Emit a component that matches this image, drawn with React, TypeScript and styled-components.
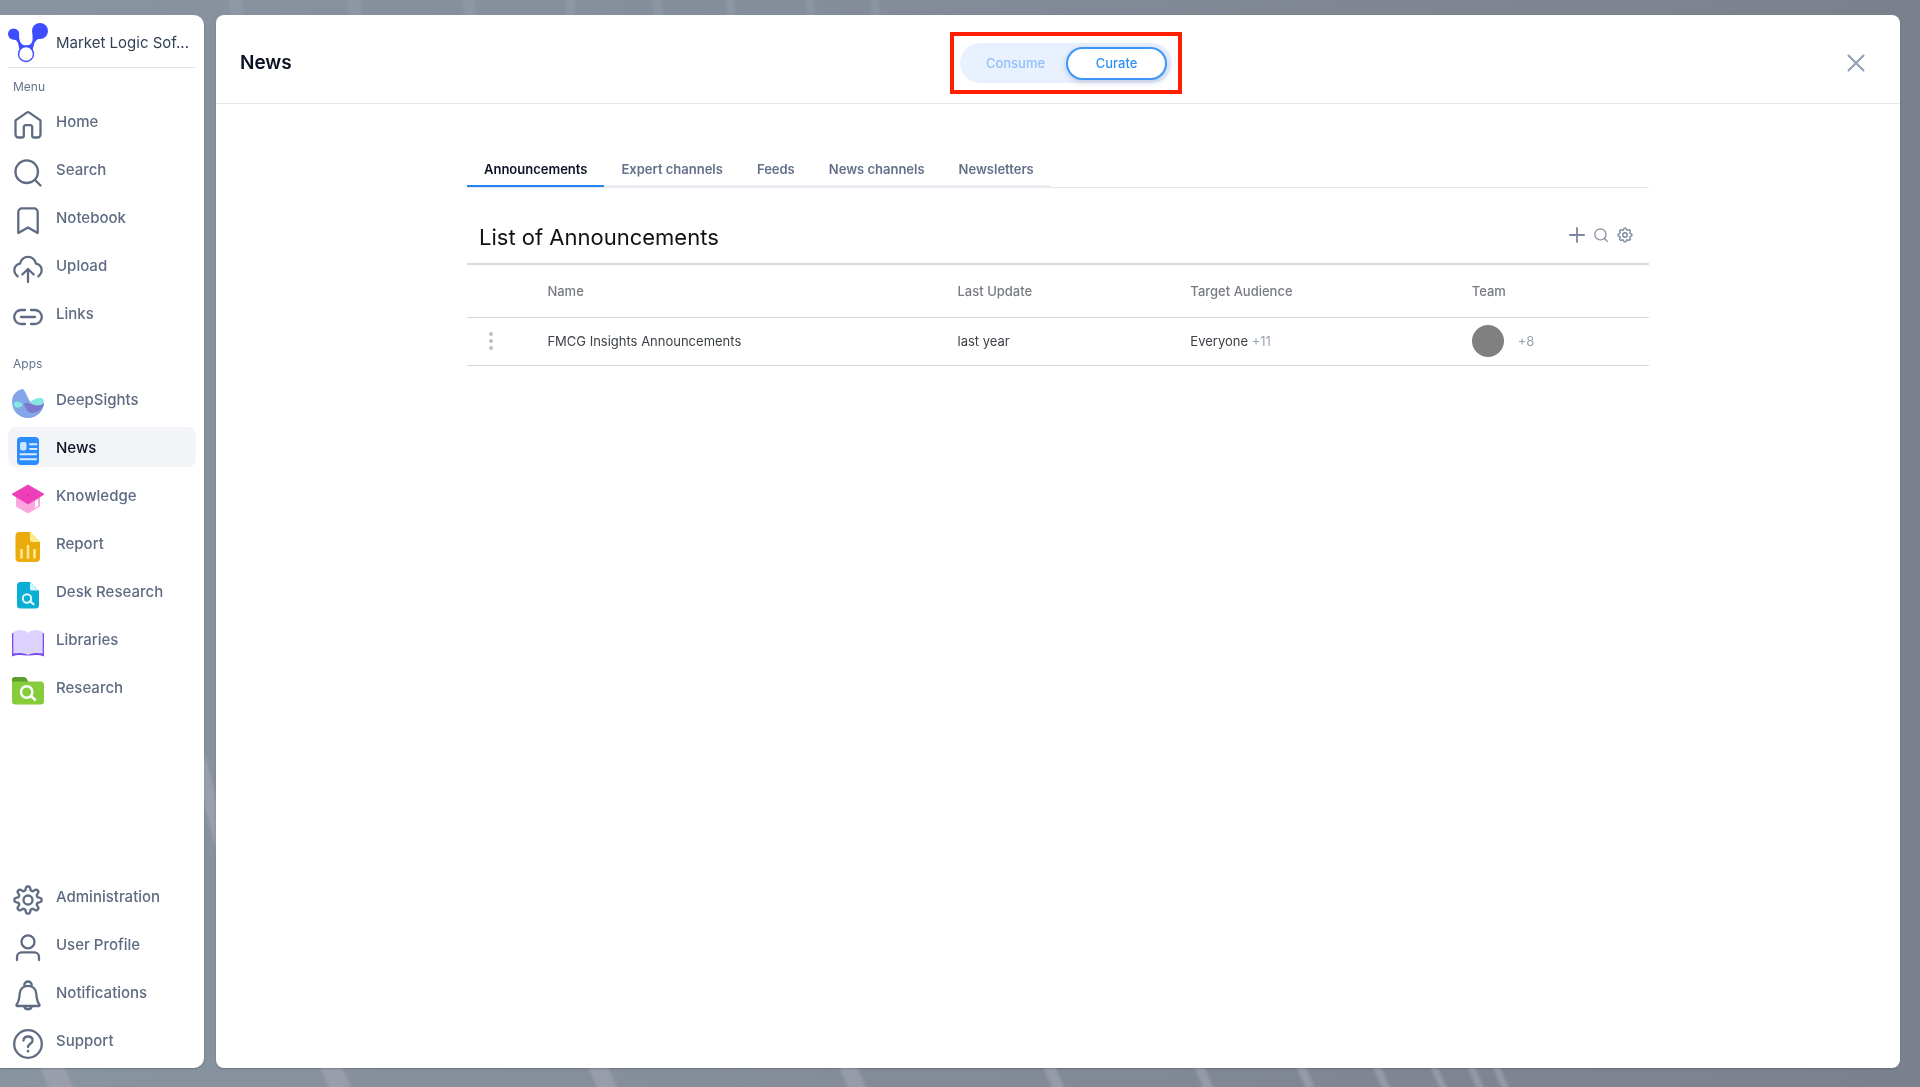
import React from "react";
import styled, { createGlobalStyle, css } from "styled-components";

const sans = `Inter, "Liberation Sans", sans-serif`;

const GlobalStyle = createGlobalStyle`
  *, *::before, *::after { box-sizing: border-box; }
  body {
    margin: 0;
    background: #848c99;
    font-family: ${sans};
    color: #0f172a;
  }
  button { font-family: inherit; }
`;

const Page = styled.div`
  display: flex;
  gap: 12px;
  min-height: 100vh;
  padding: 15px 20px 19px 0;
`;

const Backdrop = styled.svg`
  position: fixed;
  inset: 0;
  width: 100%;
  height: 100%;
  z-index: -1;
`;

const Sidebar = styled.aside`
  display: flex;
  flex-direction: column;
  flex: 0 0 204px;
  min-width: 0;
  padding: 8px;
  background: #fff;
  border-radius: 0 10px 10px 0;
  box-shadow: 0 1px 2px rgba(30, 41, 59, 0.25);
`;

const Brand = styled.div`
  display: flex;
  align-items: center;
  gap: 8px;
  padding-bottom: 4px;
  border-bottom: 1px solid #e2e4e8;
  font-size: 15px;
  line-height: 24px;
  color: #334155;
  white-space: nowrap;
  svg { flex: none; }
`;

const GroupLabel = styled.h2<{ $first?: boolean }>`
  margin: ${(p) => (p.$first ? "10px" : "22px")} 0 ${(p) => (p.$first ? "5px" : "6px")};
  padding-left: 5px;
  font-size: 12px;
  line-height: 18px;
  font-weight: 400;
  color: #64748b;
`;

const NavList = styled.ul<{ $bottom?: boolean }>`
  display: flex;
  flex-direction: column;
  gap: 8px;
  margin: ${(p) => (p.$bottom ? "auto" : "0")} 0 0;
  padding: 0;
  list-style: none;
`;

const NavLink = styled.a<{ $active?: boolean }>`
  display: flex;
  align-items: center;
  gap: 12px;
  height: 40px;
  padding: 1px 0 0 4px;
  border-radius: 8px;
  font-size: 15px;
  line-height: 24px;
  font-weight: 500;
  color: #5f6b82;
  text-decoration: none;
  ${(p) => p.$active && css`
    background: #f2f4f8;
    color: #0b1224;
  `}
  svg { align-self: flex-end; flex: none; }
`;

const Main = styled.main`
  flex: 1;
  min-width: 0;
  background: #fff;
  border-radius: 8px;
  box-shadow: 0 1px 2px rgba(30, 41, 59, 0.25);
`;

const Header = styled.header`
  display: grid;
  grid-template-columns: 1fr auto 1fr;
  align-items: center;
  height: 89px;
  padding: 8px 8px 0 24px;
  border-bottom: 1px solid #e5e7eb;
`;

const PageTitle = styled.h1`
  margin: 0;
  font-size: 19px;
  line-height: 28px;
  font-weight: 600;
  color: #0b1224;
`;

const Highlight = styled.div`
  padding: 7px 6px;
  border: 4px solid #ff1e00;
`;

const Toggle = styled.div`
  display: flex;
  height: 40px;
  padding: 4px 5px;
  border-radius: 20px;
  background: #eaf1fe;
`;

const ToggleButton = styled.button<{ $on?: boolean }>`
  width: 101px;
  height: 33px;
  padding: 0 0 2px;
  border: 2px solid ${(p) => (p.$on ? "#3b96f7" : "transparent")};
  border-radius: 17px;
  background: ${(p) => (p.$on ? "#fff" : "transparent")};
  box-shadow: ${(p) => (p.$on ? "0 2px 6px rgba(51, 80, 130, 0.25)" : "none")};
  font-size: 13px;
  font-weight: 500;
  color: ${(p) => (p.$on ? "#2f8ff5" : "#8fc0fb")};
`;

const CloseButton = styled.button`
  display: grid;
  place-items: center;
  justify-self: end;
  width: 48px;
  height: 48px;
  margin-right: 12px;
  padding: 0;
  border: 0;
  background: none;
`;

const Content = styled.div`
  width: 100%;
  max-width: 1182px;
  margin: 0 auto;
  padding-top: 48px;
`;

const Tabs = styled.div`
  display: flex;
  border-bottom: 1px solid #e5e7eb;
`;

const Tab = styled.button<{ $on?: boolean }>`
  height: 35px;
  padding: 0 17px;
  border: 0;
  border-bottom: 2px solid ${(p) => (p.$on ? "#2486f5" : "#eceef3")};
  background: none;
  font-size: 13px;
  line-height: 20px;
  font-weight: 600;
  color: ${(p) => (p.$on ? "#0b1224" : "#64708a")};
`;

const ListHead = styled.div`
  display: flex;
  align-items: center;
  justify-content: space-between;
  height: 77px;
  padding: 22px 14px 0 12px;
  border-bottom: 2px solid #dadbdd;
`;

const ListTitle = styled.h2`
  margin: 0;
  font-size: 22px;
  line-height: 32px;
  font-weight: 400;
  color: #111;
`;

const Tools = styled.div`
  display: flex;
  align-items: center;
  gap: 4px;
  margin-bottom: 4px;
`;

const ToolButton = styled.button`
  display: grid;
  place-items: center;
  width: 20px;
  height: 32px;
  padding: 0;
  border: 0;
  background: none;
`;

const Table = styled.table`
  width: 100%;
  table-layout: fixed;
  border-collapse: collapse;
  font-size: 13px;
  line-height: 20px;
`;

const Col = styled.col<{ $w: string }>`
  width: ${(p) => p.$w};
`;

const Th = styled.th`
  height: 52px;
  padding: 0;
  border-bottom: 1px solid #d6d8da;
  text-align: left;
  font-weight: 500;
  color: #777b80;
`;

const Td = styled.td`
  height: 48px;
  padding: 0;
  border-bottom: 1px solid #d6d8da;
  color: #3d4247;
`;

const RowMenu = styled.button`
  display: grid;
  place-items: center;
  width: 24px;
  height: 32px;
  margin-left: 12px;
  padding: 0;
  border: 0;
  background: none;
`;

const Muted = styled.span`
  color: #9aa5b1;
`;

const Team = styled.div`
  display: flex;
  align-items: center;
  gap: 14px;
`;

const Avatar = styled.span`
  width: 32px;
  height: 32px;
  border-radius: 50%;
  background: #808080;
`;

const Line = ({ children }: { children: React.ReactNode }) => (
  <svg width="32" height="32" viewBox="0 0 32 32" fill="none" stroke="#5f6b82" strokeWidth="2.3" strokeLinecap="round" strokeLinejoin="round" aria-hidden="true">
    {children}
  </svg>
);

const Fill = ({ children }: { children: React.ReactNode }) => (
  <svg width="32" height="32" viewBox="0 0 32 32" fill="none" aria-hidden="true">
    {children}
  </svg>
);

const gearPath = (c: number, rOut: number, rIn: number) => {
  const pts: string[] = [];
  const steps = 96;
  for (let i = 0; i < steps; i++) {
    const a = (i / steps) * Math.PI * 2;
    const wave = Math.tanh(2 * Math.cos(8 * a)) / Math.tanh(2);
    const r = (rOut + rIn) / 2 + ((rOut - rIn) / 2) * wave;
    pts.push(`${(c + r * Math.sin(a)).toFixed(2)} ${(c - r * Math.cos(a)).toFixed(2)}`);
  }
  return `M${pts.join("L")}Z`;
};

const icons: Record<string, React.ReactNode> = {
  Home: <Line><path d="M3.5 11.4 14.7 3.6a2.2 2.2 0 0 1 2.6 0L28.5 11.4V25.5a3 3 0 0 1-3 3H22a1.8 1.8 0 0 1-1.8-1.8V18a1.8 1.8 0 0 0-1.8-1.8h-4.8a1.8 1.8 0 0 0-1.8 1.8v8.7a1.8 1.8 0 0 1-1.8 1.8H6.5a3 3 0 0 1-3-3Z" /></Line>,
  Search: <Line><circle cx="14.7" cy="14.7" r="11.3" /><path d="m22.8 22.8 5.7 5.7" /></Line>,
  Notebook: <Line><path d="M6.3 28V7a3.6 3.6 0 0 1 3.6-3.6h12.2A3.6 3.6 0 0 1 25.7 7v21L16 22.500Z" /></Line>,
  Upload: <Line><path d="M5.6 23.2C0.5 19.5 1.5 12 8 10.7 10.5 1.6 21.5 1.6 24 10.7c6.5 1.3 7.5 8.8 2.4 12.5M16 29V16.5M10.3 21.5 16 16l5.7 5.5" /></Line>,
  Links: <Line><path d="M13 9H9.2a7 7 0 0 0 0 14H13M19 9h3.8a7 7 0 0 1 0 14H19M9 16h14" /></Line>,
  DeepSights: (
    <Fill>
      <path d="M10.500 2C3.5 3.2 0 9 0 15c0 9 7 16 16 16 9.5 0 15.5-7 16-15-3.5 2.5-8 4-12 .5C15 12 13.5 2 10.500 2Z" fill="#84a5e8" />
      <path d="M11 17c4-2 7-1 11 .5 4 1.3 8-.2 10-2C31.500 22 26 26 20 26s-5-6-9-9Z" fill="#7c79cf" />
      <path d="M17.5 15.5c4-3.5 9-5.5 13-4 2 1 1.7 4 0 5.500-4 2.5-8.5 1.5-13-1.500ZM2 16c1.5-2.5 6-2 9 1.5-2 3.5-6 4-8 2.2C1.8 18.7 1.4 17.3 2 16Z" fill="#86e6e2" />
    </Fill>
  ),
  News: (
    <Fill>
      <rect x="5" y="2" width="22" height="28" rx="4" fill="#2b8cff" />
      <rect x="8" y="7" width="6.5" height="8.5" rx="2" fill="#cfe4ff" />
      <path d="M18 9.2h6.500M18 14h6.500M8.5 19.2h15.500M8.5 24.2h15.500" stroke="#dcebff" strokeWidth="2" strokeLinecap="round" />
    </Fill>
  ),
  Knowledge: (
    <Fill>
      <path d="M4 12h24v11.500L16 30.500 4 23.500Z" fill="#fba6df" />
      <path d="m23 18 3-1.8v6.8L23 25Z" fill="#fff" />
      <path d="M16 1.5 31.5 10.500q1 .7 0 1.4L16 21.500.5 11.900q-1-.7 0-1.400Z" fill="#ee3fb8" />
      <circle cx="16" cy="12" r="0.9" fill="#d61f9b" />
    </Fill>
  ),
  Report: (
    <Fill>
      <path d="M7.5 1H18l10 10v16a4 4 0 0 1-4 4H7.500a4 4 0 0 1-4-4V5a4 4 0 0 1 4-4Z" fill="#ebab0c" />
      <path d="M18 1l10 10h-8a2 2 0 0 1-2-2Z" fill="#fdea8f" />
      <path d="M9.5 19v7.500M16 15v11.500M22.5 19v7.500" stroke="#fdea8f" strokeWidth="2.6" strokeLinecap="round" />
    </Fill>
  ),
  "Desk Research": (
    <Fill>
      <path d="M8.5 3H18l9 8.500V26a3.500 3.500 0 0 1-3.500 3.500h-15A3.500 3.500 0 0 1 5 26V6.500A3.500 3.500 0 0 1 8.500 3Z" fill="#0aaed4" />
      <path d="M18 3l9 8.500h-7.500A1.500 1.500 0 0 1 18 10Z" fill="#cff7fd" />
      <circle cx="15" cy="19.5" r="4.2" stroke="#dff9fe" strokeWidth="2" />
      <path d="m18.2 22.2 3.3 3" stroke="#dff9fe" strokeWidth="2.2" strokeLinecap="round" />
    </Fill>
  ),
  Libraries: (
    <Fill>
      <path d="M0 6h3v20h26V6h3v23.500c-5-2-10-1.500-14-1h-4C10 28 5 27.500 0 29.500Z" fill="#7c4dee" />
      <path d="M1.3 5C6 2 13 2.2 16 6c3-3.8 10-4 14.7-1v21.500c-5-.8-10-1-14.7 1.500-4.700-2.500-9.700-2.300-14.700-1.500Z" fill="#dcd3fe" />
    </Fill>
  ),
  Research: (
    <Fill>
      <path d="M0 10V4.500A2.500 2.500 0 0 1 2.500 2H12a3 3 0 0 1 2.600 1.500L17 8Z" fill="#5f9e2b" />
      <path d="M0 6.500h28.500A3.500 3.500 0 0 1 32 10v16a3.500 3.500 0 0 1-3.500 3.500h-25A3.500 3.500 0 0 1 0 26Z" fill="#86cc3b" />
      <circle cx="14.7" cy="17" r="5.7" stroke="#fff" strokeWidth="2.4" />
      <path d="m19 21 4 3.700" stroke="#fff" strokeWidth="2.6" strokeLinecap="round" />
    </Fill>
  ),
  Administration: <Line><path d={gearPath(16, 13.6, 9.8)} /><circle cx="16" cy="16" r="4.5" /></Line>,
  "User Profile": <Line><circle cx="16" cy="9.8" r="6.5" /><path d="M5 28v-3a4.600 4.600 0 0 1 4.600-4.600h12.800A4.600 4.600 0 0 1 27 25v3" /></Line>,
  Notifications: <Line><path d="M12.3 6.500V5.200a3.700 3.700 0 0 1 7.400 0v1.300M16 5.800c5 0 8 3.500 8.300 8 .3 5 .7 7.500 3.200 11a.8.8 0 0 1-.6 1.200H5.100a.8.8 0 0 1-.6-1.200c2.500-3.500 2.900-6 3.200-11 .3-4.500 3.300-8 8.300-8ZM12.300 26.500c.5 3.500 6.900 3.500 7.400 0" /></Line>,
  Support: <Line><circle cx="16" cy="16" r="13.8" /><path d="M11.5 12.500c.3-3 2.200-4 4.600-4 2.600 0 4.500 1.500 4.500 4 0 3.400-4.600 3-4.600 6.500" /><path d="M16 23v.2" strokeWidth="2.6" /></Line>,
};

const menu = ["Home", "Search", "Notebook", "Upload", "Links"];
const apps = ["DeepSights", "News", "Knowledge", "Report", "Desk Research", "Libraries", "Research"];
const account = ["Administration", "User Profile", "Notifications", "Support"];
const tabs = ["Announcements", "Expert channels", "Feeds", "News channels", "Newsletters"];

const Nav = ({ items, bottom }: { items: string[]; bottom?: boolean }) => (
  <NavList $bottom={bottom}>
    {items.map((name) => (
      <li key={name}>
        <NavLink href="#" $active={name === "News"} aria-current={name === "News" ? "page" : undefined}>
          {icons[name]}
          {name}
        </NavLink>
      </li>
    ))}
  </NavList>
);

const lowStreaks = [
  [56, 24], [335, 22], [602, 20], [852, 18], [1053, 12], [1203, 10], [1305, 9], [1381, 8], [1438, 7], [1475, 7], [1500, 7],
];

const highStreaks = [[236, 14], [354, 13], [469, 12], [570, 10], [657, 9], [730, 9], [810, 9], [875, 8]];

export default function App() {
  return (
    <>
      <GlobalStyle />
      <Backdrop viewBox="0 0 1920 1087" preserveAspectRatio="none" aria-hidden="true">
        <defs>
          <linearGradient id="sky" x1="0" x2="1" y1="0" y2="0">
            <stop offset="0" stopColor="#8994a1" />
            <stop offset="0.5" stopColor="#838b98" />
            <stop offset="1" stopColor="#7b818c" />
          </linearGradient>
          <filter id="soft" x="-50%" width="200%"><feGaussianBlur stdDeviation="1.5" /></filter>
        </defs>
        <rect width="1920" height="1087" fill="url(#sky)" />
        {lowStreaks.map(([x, w]) => (
          <path key={x} d={`M${x - w / 2 - 7} 1060h${w}l14 32h${-w}Z`} fill="#a3a5b3" opacity="0.65" filter="url(#soft)" />
        ))}
        {highStreaks.map(([x, w]) => (
          <path key={x} d={`M${x - w / 2 - 1} -4h${w}l3 24h${-w}Z`} fill="#9aa3b0" opacity="0.4" filter="url(#soft)" />
        ))}
        <path d="M200 745 Q214 770 224 860 L216 850 Q206 810 200 790Z" fill="#a3a5b3" opacity="0.7" filter="url(#soft)" />
      </Backdrop>
      <Page>
        <Sidebar>
          <Brand>
            <svg width="40" height="40" viewBox="0 0 40 40" aria-hidden="true">
              <path d="M9 7.500C12 10 10.500 13 11.500 16.500 12.500 21 14.500 22.300 18 22.300S24 21 24.500 17C25 13.500 23.500 11 26 6L35 15C29 15.500 27 18 26 21.500L24.500 27H11.500L10.500 22C9.500 18.500 9 17 5 16.500Z" fill="#3d4dff" />
              <circle cx="5.6" cy="11" r="5.6" fill="#3d4dff" />
              <circle cx="32" cy="8" r="8" fill="#3d4dff" />
              <circle cx="18" cy="31" r="7.5" fill="#fff" stroke="#3d4dff" strokeWidth="1.4" />
            </svg>
            Market Logic Sof...
          </Brand>
          <GroupLabel $first>Menu</GroupLabel>
          <Nav items={menu} />
          <GroupLabel>Apps</GroupLabel>
          <Nav items={apps} />
          <Nav items={account} bottom />
        </Sidebar>
        <Main>
          <Header>
            <PageTitle>News</PageTitle>
            <Highlight>
              <Toggle role="group" aria-label="Mode">
                <ToggleButton type="button" aria-pressed="false">Consume</ToggleButton>
                <ToggleButton type="button" aria-pressed="true" $on>Curate</ToggleButton>
              </Toggle>
            </Highlight>
            <CloseButton type="button" aria-label="Close">
              <svg width="18" height="18" viewBox="0 0 18 18" stroke="#8f9bb0" strokeWidth="2" strokeLinecap="round">
                <path d="M1.500 1.500l15 15M16.500 1.500l-15 15" />
              </svg>
            </CloseButton>
          </Header>
          <Content>
            <Tabs role="tablist">
              {tabs.map((t, i) => (
                <Tab key={t} type="button" role="tab" aria-selected={i === 0} $on={i === 0}>{t}</Tab>
              ))}
            </Tabs>
            <ListHead>
              <ListTitle>List of Announcements</ListTitle>
              <Tools>
                <ToolButton type="button" aria-label="Add">
                  <svg width="16" height="16" viewBox="0 0 16 16" stroke="#7a879c" strokeWidth="1.8" strokeLinecap="round"><path d="M8 .9v14.200M.9 8h14.200" /></svg>
                </ToolButton>
                <ToolButton type="button" aria-label="Search">
                  <svg width="14" height="14" viewBox="0 0 14 14" fill="none" stroke="#7a879c" strokeWidth="1.2" strokeLinecap="round"><circle cx="6.4" cy="6.4" r="5.6" /><path d="m10.500 10.500 2.800 2.800" /></svg>
                </ToolButton>
                <ToolButton type="button" aria-label="Settings">
                  <svg width="16" height="16" viewBox="0 0 32 32" fill="none" stroke="#7a879c" strokeWidth="2.8" strokeLinejoin="round"><path d={gearPath(16, 13.8, 10.8)} /><circle cx="16" cy="16" r="4.5" /></svg>
                </ToolButton>
              </Tools>
            </ListHead>
            <Table>
              <colgroup>
                <Col $w="6.8%" /><Col $w="34.7%" /><Col $w="19.7%" /><Col $w="23.8%" /><Col $w="15%" />
              </colgroup>
              <thead>
                <tr>
                  <Th aria-label="Actions" />
                  <Th>Name</Th>
                  <Th>Last Update</Th>
                  <Th>Target Audience</Th>
                  <Th>Team</Th>
                </tr>
              </thead>
              <tbody>
                <tr>
                  <Td>
                    <RowMenu type="button" aria-label="Row actions">
                      <svg width="4" height="20" viewBox="0 0 4 20" fill="#b9bfd0"><circle cx="2" cy="3" r="2" /><circle cx="2" cy="10" r="2" /><circle cx="2" cy="17" r="2" /></svg>
                    </RowMenu>
                  </Td>
                  <Td>FMCG Insights Announcements</Td>
                  <Td>last year</Td>
                  <Td>Everyone <Muted>+11</Muted></Td>
                  <Td><Team><Avatar /><Muted>+8</Muted></Team></Td>
                </tr>
              </tbody>
            </Table>
          </Content>
        </Main>
      </Page>
    </>
  );
}
